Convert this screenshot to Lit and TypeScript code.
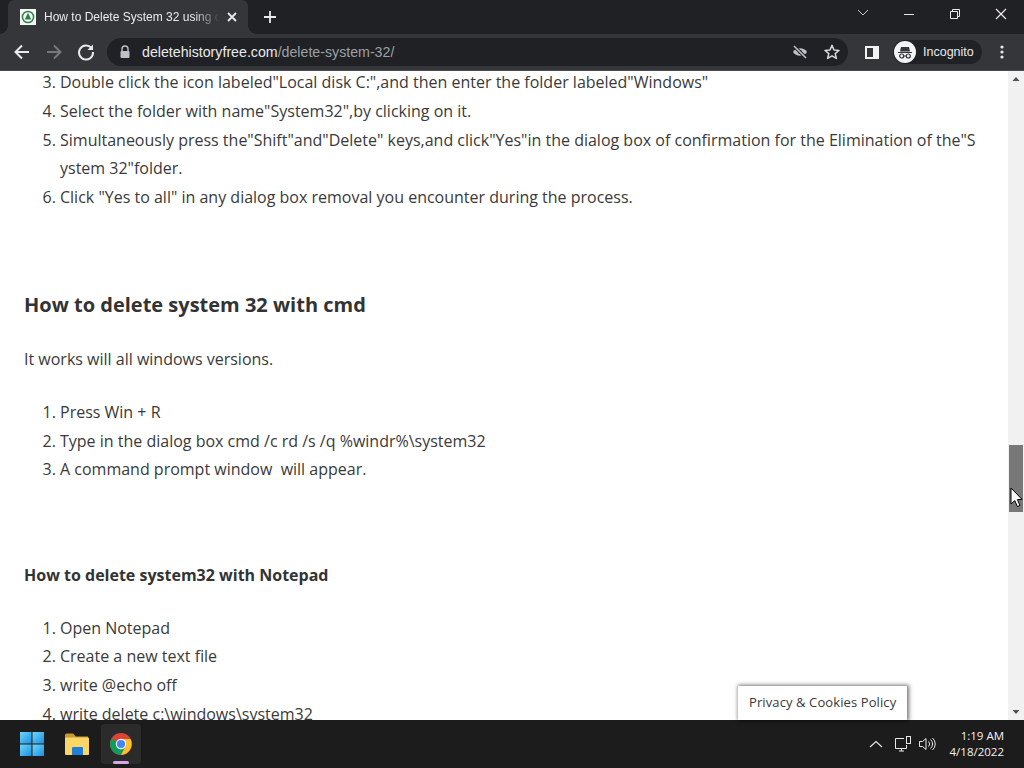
import { LitElement, css, html, svg } from 'lit';
import { customElement } from 'lit/decorators.js';

const chromeLogo = svg`
  <circle cx="12" cy="12" r="11" fill="#db4437"/>
  <path d="M12 12 L2.5 6.5 A11 11 0 0 0 12 23 L17.5 12.5 Z" fill="#0f9d58"/>
  <path d="M12 7 H21.5 A11 11 0 0 1 12 23 L16.4 14.5 Z" fill="#fbc02d"/>
  <circle cx="12" cy="12" r="5.2" fill="#fff"/>
  <circle cx="12" cy="12" r="4.1" fill="#4285f4"/>
`;

@customElement('app-root')
export class AppRoot extends LitElement {

  static styles = css`
    :host {
      display: flex;
      flex-direction: column;
      width: 1024px;
      height: 768px;
      overflow: hidden;
      position: relative;
      font-family: "Open Sans", sans-serif;
      background: #fff;
    }

    /* tab strip */
    .tabstrip {
      height: 34px;
      background: #202124;
      display: flex;
      align-items: flex-end;
      flex: none;
    }
    .tab {
      width: 240px;
      height: 34px;
      margin-left: 8px;
      padding: 0 8px 0 12px;
      box-sizing: border-box;
      background: #35363a;
      border-radius: 6px 6px 0 0;
      display: flex;
      align-items: center;
      color: #e8eaed;
      font-family: "Liberation Sans", sans-serif;
      font-size: 12px;
      position: relative;
    }
    /* the small flares at the foot of the active tab */
    .tab::before,
    .tab::after {
      content: "";
      position: absolute;
      bottom: 0;
      width: 8px;
      height: 8px;
    }
    .tab::before {
      left: -8px;
      background: radial-gradient(circle at 0 0, transparent 7.5px, #35363a 8px);
    }
    .tab::after {
      right: -8px;
      background: radial-gradient(circle at 100% 0, transparent 7.5px, #35363a 8px);
    }
    .favicon {
      width: 16px;
      height: 16px;
      background: #fff;
      flex: none;
      margin-right: 8px;
      display: block;
    }
    .tab-title {
      flex: 1;
      white-space: nowrap;
      overflow: hidden;
      -webkit-mask-image: linear-gradient(90deg, #000 85%, transparent 100%);
      mask-image: linear-gradient(90deg, #000 85%, transparent 100%);
    }
    .tab-close {
      width: 16px;
      height: 16px;
      margin-left: 4px;
      flex: none;
    }
    .new-tab {
      width: 16px;
      height: 16px;
      margin: 0 0 9px 14px;
      flex: none;
    }
    .window-controls {
      margin-left: auto;
      align-self: flex-start;
      display: flex;
      align-items: center;
      height: 30px;
    }
    .window-controls svg {
      display: block;
      width: 46px;
      height: 30px;
    }

    /* toolbar */
    .toolbar {
      height: 36px;
      background: #35363a;
      display: flex;
      align-items: center;
      flex: none;
      border-bottom: 1px solid #4a4b4f;
    }
    .nav {
      width: 32px;
      height: 32px;
      display: block;
      flex: none;
    }
    .nav.first {
      margin-left: 6px;
    }
    .omnibox {
      width: 741px;
      height: 28px;
      margin-left: 5px;
      border-radius: 14px;
      background: #202124;
      display: flex;
      align-items: center;
      flex: none;
      font-family: "Liberation Sans", sans-serif;
      font-size: 14.2px;
      color: #e8eaed;
    }
    .lock {
      margin: 0 11px 0 12px;
      width: 12px;
      height: 14px;
      flex: none;
    }
    .url-rest {
      color: #9aa0a6;
    }
    .omni-icons {
      margin-left: auto;
      display: flex;
      gap: 12px;
      margin-right: 6px;
    }
    .omni-icons svg {
      display: block;
      width: 20px;
      height: 20px;
    }
    .side {
      width: 16px;
      height: 16px;
      margin-left: 16px;
      flex: none;
    }
    .incognito {
      display: flex;
      align-items: center;
      margin-left: 13px;
      height: 24px;
      width: 89px;
      background: #202124;
      border-radius: 12px;
      color: #e8eaed;
      font-family: "Liberation Sans", sans-serif;
      font-size: 12.5px;
      flex: none;
    }
    .incognito svg {
      width: 24px;
      height: 24px;
      margin-right: 6px;
      flex: none;
    }
    .menu {
      width: 16px;
      height: 16px;
      margin-left: 12px;
      flex: none;
    }

    /* page */
    .viewport {
      flex: 1;
      min-height: 0;
      display: flex;
      background: #fff;
      overflow: hidden;
    }
    .page {
      flex: 1;
      min-width: 0;
      padding: 0 30px 0 24px;
      margin-top: -3px;
      color: #3a3a3a;
      font-size: 16px;
      line-height: 28.8px;
    }
    ol {
      margin: 0;
      padding-left: 36px;
      word-break: break-all;
    }
    p {
      margin: 0 0 24.1px;
    }
    h2 {
      margin: 78px 0 0;
      font-size: 20px;
      line-height: 30px;
      font-weight: 700;
      color: #333;
    }
    h2 + p {
      margin-top: 25px;
    }
    h4 {
      margin: 76.9px 0 23.6px;
      font-size: 16px;
      line-height: 28.8px;
      font-weight: 700;
      color: #333;
    }
    .scrollbar {
      width: 16px;
      flex: none;
      background: #f1f1f1;
      position: relative;
      display: flex;
      flex-direction: column;
      justify-content: space-between;
      align-items: center;
    }
    .arrow {
      width: 16px;
      height: 16px;
      display: block;
    }
    .thumb {
      position: absolute;
      left: 1px;
      width: 14px;
      top: 374px;
      height: 67px;
      background: #787878;
    }
    .cursor {
      position: absolute;
      left: 1010px;
      top: 487px;
      width: 13px;
      height: 21px;
    }
    .cookie {
      position: absolute;
      left: 738px;
      top: 686px;
      width: 169px;
      height: 34px;
      box-sizing: border-box;
      background: #fff;
      padding-left: 11px;
      font-size: 13px;
      line-height: 33px;
      letter-spacing: 0.1px;
      color: #3a3a3a;
      white-space: nowrap;
      box-shadow: 1px 0 4px 1px rgba(0, 0, 0, 0.55);
    }

    /* taskbar */
    .taskbar {
      height: 48px;
      flex: none;
      background: #1c1c1c;
      display: flex;
      align-items: center;
      position: relative;
      color: #fff;
      font-family: "Liberation Sans", sans-serif;
    }
    .task-icon {
      width: 40px;
      height: 40px;
      display: flex;
      align-items: center;
      justify-content: center;
      border-radius: 4px;
      flex: none;
      position: relative;
    }
    .task-icon.start {
      margin-left: 12px;
    }
    .task-icon.folder {
      margin-left: 5px;
    }
    .task-icon.active {
      margin-left: 4px;
      background: #2b2b2b;
    }
    .task-icon.active::after {
      content: "";
      position: absolute;
      left: 12px;
      right: 12px;
      bottom: 0;
      height: 3px;
      border-radius: 2px;
      background: #d9a6e0;
    }
    .tray {
      margin-left: auto;
      display: flex;
      align-items: center;
    }
    .tray svg {
      display: block;
      flex: none;
    }
    .net {
      margin-left: 10px;
    }
    .vol {
      margin-left: 6px;
    }
    .clock {
      margin: 0 20px 0 14px;
      text-align: right;
      font-family: "Open Sans", sans-serif;
      font-size: 11.5px;
      line-height: 16px;
      color: #f2f2f2;
    }
  `;

  render() {
    return html`
      <div class="tabstrip">
        <div class="tab">
          <svg class="favicon" viewBox="0 0 16 16">
            <rect width="16" height="16" fill="#f4f8f2"/>
            <circle cx="8" cy="8" r="5.6" fill="none" stroke="#2e7d4a" stroke-width="1.5"/>
            <path d="M8 3.8 L11.2 10.4 H4.8 Z" fill="#2e7d4a"/>
          </svg>
          <span class="tab-title">How to Delete System 32 using cmd</span>
          <svg class="tab-close" viewBox="0 0 16 16">
            <path d="M4 4 L12 12 M12 4 L4 12" stroke="#e8eaed" stroke-width="1.8"/>
          </svg>
        </div>
        <svg class="new-tab" viewBox="0 0 16 16">
          <path d="M8 2 V14 M2 8 H14" stroke="#e8eaed" stroke-width="1.8"/>
        </svg>
        <div class="window-controls">
          <svg viewBox="0 0 46 30">
            <path d="M18 10 L23 15 L28 10" fill="none" stroke="#c8c8c8" stroke-width="1"/>
          </svg>
          <svg viewBox="0 0 46 30">
            <path d="M18 14.5 H28" stroke="#e8e8e8" stroke-width="1"/>
          </svg>
          <svg viewBox="0 0 46 30">
            <path d="M18.5 11.5 H25.5 V18.5 H18.5 Z M20.5 11.5 V9.5 H27.5 V16.5 H25.5" fill="none" stroke="#e8e8e8" stroke-width="1"/>
          </svg>
          <svg viewBox="0 0 46 30">
            <path d="M18 9 L28 19 M28 9 L18 19" stroke="#f0f0f0" stroke-width="1.1"/>
          </svg>
        </div>
      </div>

      <div class="toolbar">
        <svg class="nav first" viewBox="0 0 32 32">
          <path d="M23 16 H10 M16 9.5 L9.5 16 L16 22.5" fill="none" stroke="#e8eaed" stroke-width="2"/>
        </svg>
        <svg class="nav" viewBox="0 0 32 32">
          <path d="M9 16 H22 M16 9.5 L22.5 16 L16 22.5" fill="none" stroke="#77787b" stroke-width="2"/>
        </svg>
        <svg class="nav" viewBox="0 0 32 32">
          <path d="M21.5 12.2 A7 7 0 1 0 23 16" fill="none" stroke="#e8eaed" stroke-width="2"/>
          <path d="M23 8.5 V14 H17.5 Z" fill="#e8eaed"/>
        </svg>
        <div class="omnibox">
          <svg class="lock" viewBox="0 0 12 14">
            <path d="M3 6 V4 A3 3 0 0 1 9 4 V6" fill="none" stroke="#bdc1c6" stroke-width="1.4"/>
            <rect x="1.5" y="6" width="9" height="7" rx="1" fill="#bdc1c6"/>
          </svg>
          <span>deletehistoryfree.com<span class="url-rest">/delete-system-32/</span></span>
          <div class="omni-icons">
            <svg viewBox="0 0 20 20">
              <path d="M3 10 C6 5 14 5 17 10 C14 15 6 15 3 10 Z" fill="#bdc1c6"/>
              <circle cx="10" cy="10" r="2" fill="#202124"/>
              <path d="M4 4 L16 16" stroke="#202124" stroke-width="3.4"/>
              <path d="M4 4 L16 16" stroke="#bdc1c6" stroke-width="1.6"/>
            </svg>
            <svg viewBox="0 0 20 20">
              <path d="M10 3.4 L12 8 L17 8.4 L13.2 11.6 L14.4 16.4 L10 13.8 L5.6 16.4 L6.8 11.6 L3 8.4 L8 8 Z" fill="none" stroke="#d6d8da" stroke-width="1.5" stroke-linejoin="round"/>
            </svg>
          </div>
        </div>
        <svg class="side" viewBox="0 0 16 16">
          <path fill-rule="evenodd" d="M1 2 H15 V15 H1 Z M3 4 V13 H9 V4 Z" fill="#f1f3f4"/>
        </svg>
        <div class="incognito">
          <svg viewBox="0 0 24 24">
            <circle cx="12" cy="12" r="11" fill="#f1f3f4"/>
            <path d="M5 12 H19 V13 H5 Z M8 7 H16 L17 11.5 H7 Z" fill="#35363a"/>
            <circle cx="8.7" cy="16" r="2" fill="none" stroke="#35363a" stroke-width="1.2"/>
            <circle cx="15.3" cy="16" r="2" fill="none" stroke="#35363a" stroke-width="1.2"/>
            <path d="M10.7 16 H13.3" stroke="#35363a" stroke-width="1"/>
          </svg>
          Incognito
        </div>
        <svg class="menu" viewBox="0 0 16 16">
          <circle cx="8" cy="3" r="1.6" fill="#e8eaed"/>
          <circle cx="8" cy="8" r="1.6" fill="#e8eaed"/>
          <circle cx="8" cy="13" r="1.6" fill="#e8eaed"/>
        </svg>
      </div>

      <div class="viewport">
        <div class="page">
          <ol start="3">
            <li>Double click the icon labeled"Local disk C:",and then enter the folder labeled"Windows"</li>
            <li>Select the folder with name"System32",by clicking on it.</li>
            <li>Simultaneously press the"Shift"and"Delete" keys,and click"Yes"in the dialog box of confirmation for the Elimination of the"System 32"folder.</li>
            <li>Click "Yes to all" in any dialog box removal you encounter during the process.</li>
          </ol>
          <h2>How to delete system 32 with cmd</h2>
          <p>It works will all windows versions.</p>
          <ol>
            <li>Press Win + R</li>
            <li>Type in the dialog box cmd /c rd /s /q %windr%\\system32</li>
            <li>A command prompt window&nbsp; will appear.</li>
          </ol>
          <h4>How to delete system32 with Notepad</h4>
          <ol>
            <li>Open Notepad</li>
            <li>Create a new text file</li>
            <li>write @echo off</li>
            <li>write delete c:\\windows\\system32</li>
          </ol>
        </div>
        <div class="scrollbar">
          <svg class="arrow" viewBox="0 0 16 16"><path d="M4.5 10 L8 6 L11.5 10 Z" fill="#505050"/></svg>
          <div class="thumb"></div>
          <svg class="arrow" viewBox="0 0 16 16"><path d="M4.5 6 L8 10 L11.5 6 Z" fill="#505050"/></svg>
        </div>
      </div>

      <div class="taskbar">
        <div class="task-icon start">
          <svg width="26" height="26" viewBox="0 0 26 26">
            <defs>
              <linearGradient id="win" x1="0" y1="0" x2="1" y2="1">
                <stop offset="0" stop-color="#6fd6fb"/>
                <stop offset="1" stop-color="#1a8fe0"/>
              </linearGradient>
            </defs>
            <rect x="1" y="1" width="11.5" height="11.5" fill="url(#win)"/>
            <rect x="13.5" y="1" width="11.5" height="11.5" fill="url(#win)"/>
            <rect x="1" y="13.5" width="11.5" height="11.5" fill="url(#win)"/>
            <rect x="13.5" y="13.5" width="11.5" height="11.5" fill="url(#win)"/>
          </svg>
        </div>
        <div class="task-icon folder">
          <svg width="26" height="24" viewBox="0 0 26 24">
            <path d="M1 3 A1.5 1.5 0 0 1 2.5 1.5 H9 L12 4.5 H24 V8 H1 Z" fill="#c99a2e"/>
            <rect x="1" y="5.5" width="24" height="17.5" rx="1" fill="#fcd667"/>
            <path d="M8 16 A1 1 0 0 1 9 15 H18 A1 1 0 0 1 19 16 V23 H8 Z" fill="#1f7fd4"/>
          </svg>
        </div>
        <div class="task-icon active">
          <svg width="24" height="24" viewBox="0 0 24 24">${chromeLogo}</svg>
        </div>
        <div class="tray">
          <svg width="16" height="16" viewBox="0 0 16 16">
            <path d="M2 11 L8 5.5 L14 11" fill="none" stroke="#e8e8e8" stroke-width="1.1"/>
          </svg>
          <svg class="net" width="18" height="18" viewBox="0 0 18 18">
            <path d="M10 3.5 H1.5 V13.5 H12.5 V10 M5 16 H10 M7.5 13.5 V16" fill="none" stroke="#e8e8e8" stroke-width="1"/>
            <rect x="12.5" y="1.5" width="4" height="7" fill="none" stroke="#e8e8e8" stroke-width="1"/>
          </svg>
          <svg class="vol" width="18" height="18" viewBox="0 0 18 18">
            <path d="M1.5 6.5 H4.5 L8 3.5 V14.5 L4.5 11.5 H1.5 Z" fill="none" stroke="#e8e8e8" stroke-width="1"/>
            <path d="M10.5 6.5 A3.5 3.5 0 0 1 10.5 11.5 M12.5 4.5 A6 6 0 0 1 12.5 13.5 M14.5 3 A8 8 0 0 1 14.5 15" fill="none" stroke="#e8e8e8" stroke-width="1"/>
          </svg>
          <div class="clock">1:19 AM<br />4/18/2022</div>
        </div>
      </div>

      <div class="cookie">Privacy &amp; Cookies Policy</div>

      <svg class="cursor" viewBox="0 0 13 21">
        <path d="M1 1 V17 L4.8 13.6 L7.4 19.6 L10 18.4 L7.4 12.6 L12 12.4 Z" fill="#fff" stroke="#000" stroke-width="1"/>
      </svg>
    `;
  }
}
